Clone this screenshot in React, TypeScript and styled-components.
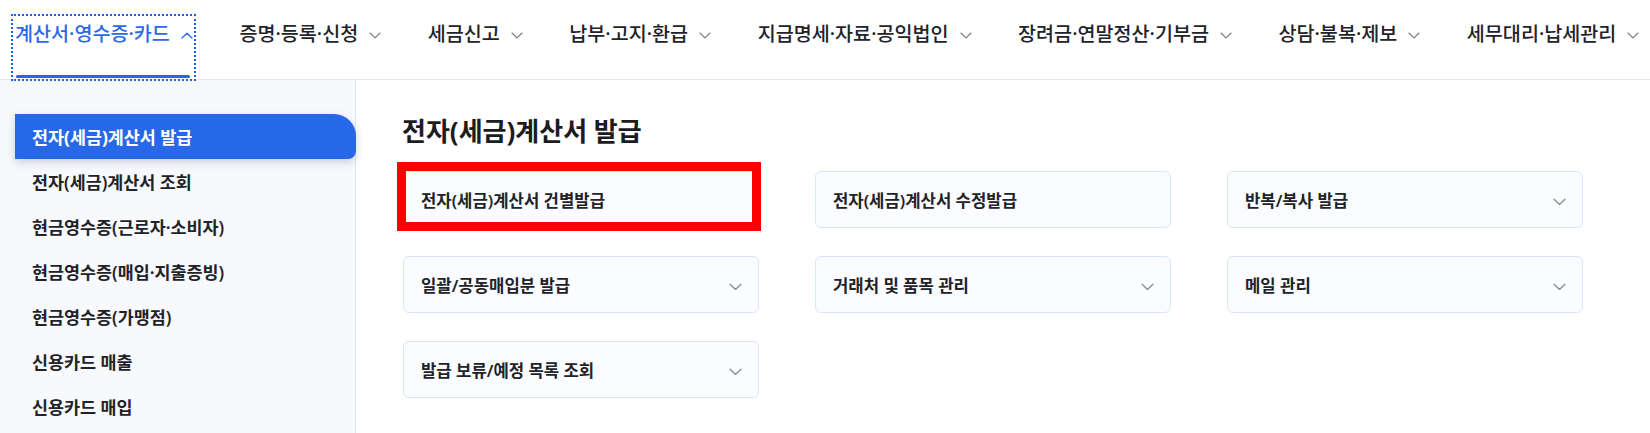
import React from "react";
import styled, { createGlobalStyle, css } from "styled-components";

const GlobalStyle = createGlobalStyle`
  html, body {
    margin: 0;
    padding: 0;
    background: #ffffff;
    font-family: "Noto Sans", "Noto Sans CJK KR", sans-serif;
    color: #1f1f1f;
  }
  * {
    box-sizing: border-box;
  }
`;

const menus = [
  "계산서·영수증·카드",
  "증명·등록·신청",
  "세금신고",
  "납부·고지·환급",
  "지급명세·자료·공익법인",
  "장려금·연말정산·기부금",
  "상담·불복·제보",
  "세무대리·납세관리",
];

const sideItems = [
  "전자(세금)계산서 발급",
  "전자(세금)계산서 조회",
  "현금영수증(근로자·소비자)",
  "현금영수증(매입·지출증빙)",
  "현금영수증(가맹점)",
  "신용카드 매출",
  "신용카드 매입",
];

const cards = [
  { label: "전자(세금)계산서 건별발급", more: false, marked: true },
  { label: "전자(세금)계산서 수정발급", more: false, marked: false },
  { label: "반복/복사 발급", more: true, marked: false },
  { label: "일괄/공동매입분 발급", more: true, marked: false },
  { label: "거래처 및 품목 관리", more: true, marked: false },
  { label: "메일 관리", more: true, marked: false },
  { label: "발급 보류/예정 목록 조회", more: true, marked: false },
];

const Chevron: React.FC<{ up?: boolean; color: string; size?: number }> = ({
  up,
  color,
  size = 12,
}) => (
  <svg width={size} height={size * 0.6} viewBox="0 0 12 7" fill="none">
    <polyline
      points={up ? "1,6 6,1.2 11,6" : "1,1 6,5.8 11,1"}
      stroke={color}
      strokeWidth="1.3"
      strokeLinecap="round"
      strokeLinejoin="round"
    />
  </svg>
);

const App: React.FC = () => {
  return (
    <Page>
      <GlobalStyle />
      <Header>
        <Nav>
          {menus.map((m, i) => (
            <NavItem key={m} $active={i === 0}>
              <span>{m}</span>
              <Chevron up={i === 0} color={i === 0 ? "#2a6ae8" : "#7a7f88"} />
            </NavItem>
          ))}
        </Nav>
      </Header>
      <Body>
        <Sidebar>
          {sideItems.map((s, i) => (
            <SideItem key={s} $active={i === 0}>
              {s}
            </SideItem>
          ))}
        </Sidebar>
        <Content>
          <Title>전자(세금)계산서 발급</Title>
          <CardGrid>
            {cards.map((c) => (
              <Card key={c.label} $marked={c.marked}>
                <span>{c.label}</span>
                {c.more && <Chevron color="#8a8f98" size={13} />}
              </Card>
            ))}
          </CardGrid>
        </Content>
      </Body>
    </Page>
  );
};

const Page = styled.div`
  width: 100%;
  height: 433px;
  display: flex;
  flex-direction: column;
  overflow: hidden;
`;

const Header = styled.header`
  height: 80px;
  flex-shrink: 0;
  display: flex;
  align-items: flex-end;
  border-bottom: 1px solid #e6e9ef;
  background: #ffffff;
`;

const Nav = styled.nav`
  display: flex;
  align-items: flex-end;
  gap: 43.5px;
  padding-left: 13px;
`;

const NavItem = styled.div<{ $active: boolean }>`
  position: relative;
  height: 63px;
  display: flex;
  align-items: flex-start;
  gap: 11px;
  padding: 5px 1px 0 2px;
  font-size: 19.6px;
  line-height: 26px;
  font-weight: 500;
  color: #222328;
  white-space: nowrap;

  svg {
    margin-top: 11px;
  }

  ${(p) =>
    p.$active &&
    css`
      color: #2a6ae8;
      outline: 2px dotted #1f5fe0;
      outline-offset: 0;

      &::after {
        content: "";
        position: absolute;
        left: 3px;
        right: 4px;
        bottom: 1px;
        height: 3px;
        border-radius: 2px;
        background: #2466e6;
      }
    `}
`;

const Body = styled.div`
  flex: 1;
  display: flex;
  min-height: 0;
`;

const Sidebar = styled.aside`
  width: 356px;
  flex-shrink: 0;
  background: #f8f9fd;
  border-right: 1px solid #e2e8f4;
  padding: 34px 0 0 15px;
  display: flex;
  flex-direction: column;
`;

const SideItem = styled.div<{ $active: boolean }>`
  height: 45px;
  display: flex;
  align-items: center;
  padding-left: 17px;
  font-size: 17.4px;
  font-weight: 600;
  color: #222328;

  ${(p) =>
    p.$active &&
    css`
      color: #ffffff;
      font-weight: 700;
      background: #2768e9;
      border-radius: 0 22px 8px 0;
      box-shadow: 0 3px 8px rgba(30, 50, 90, 0.22);
      margin-right: -1px;
    `}
`;

const Content = styled.main`
  flex: 1;
  padding: 34px 0 0 47px;
`;

const Title = styled.h2`
  margin: 0 0 23px -1px;
  font-size: 26px;
  line-height: 34px;
  font-weight: 700;
  color: #1c1c1f;
`;

const CardGrid = styled.div`
  display: grid;
  grid-template-columns: repeat(3, 356px);
  grid-auto-rows: 57px;
  column-gap: 56px;
  row-gap: 28px;
`;

const Card = styled.div<{ $marked: boolean }>`
  position: relative;
  display: flex;
  align-items: center;
  justify-content: space-between;
  padding: 0 16px 0 17px;
  background: #fbfcff;
  border: 1px solid #dbe5f8;
  border-radius: 6px;
  font-size: 16.7px;
  font-weight: 600;
  color: #222328;

  svg {
    margin-top: 4px;
  }

  ${(p) =>
    p.$marked &&
    css`
      &::after {
        content: "";
        position: absolute;
        top: -10px;
        left: -7px;
        right: -3px;
        bottom: -4px;
        border: 9px solid #ff0000;
      }
    `}
`;

export default App;
